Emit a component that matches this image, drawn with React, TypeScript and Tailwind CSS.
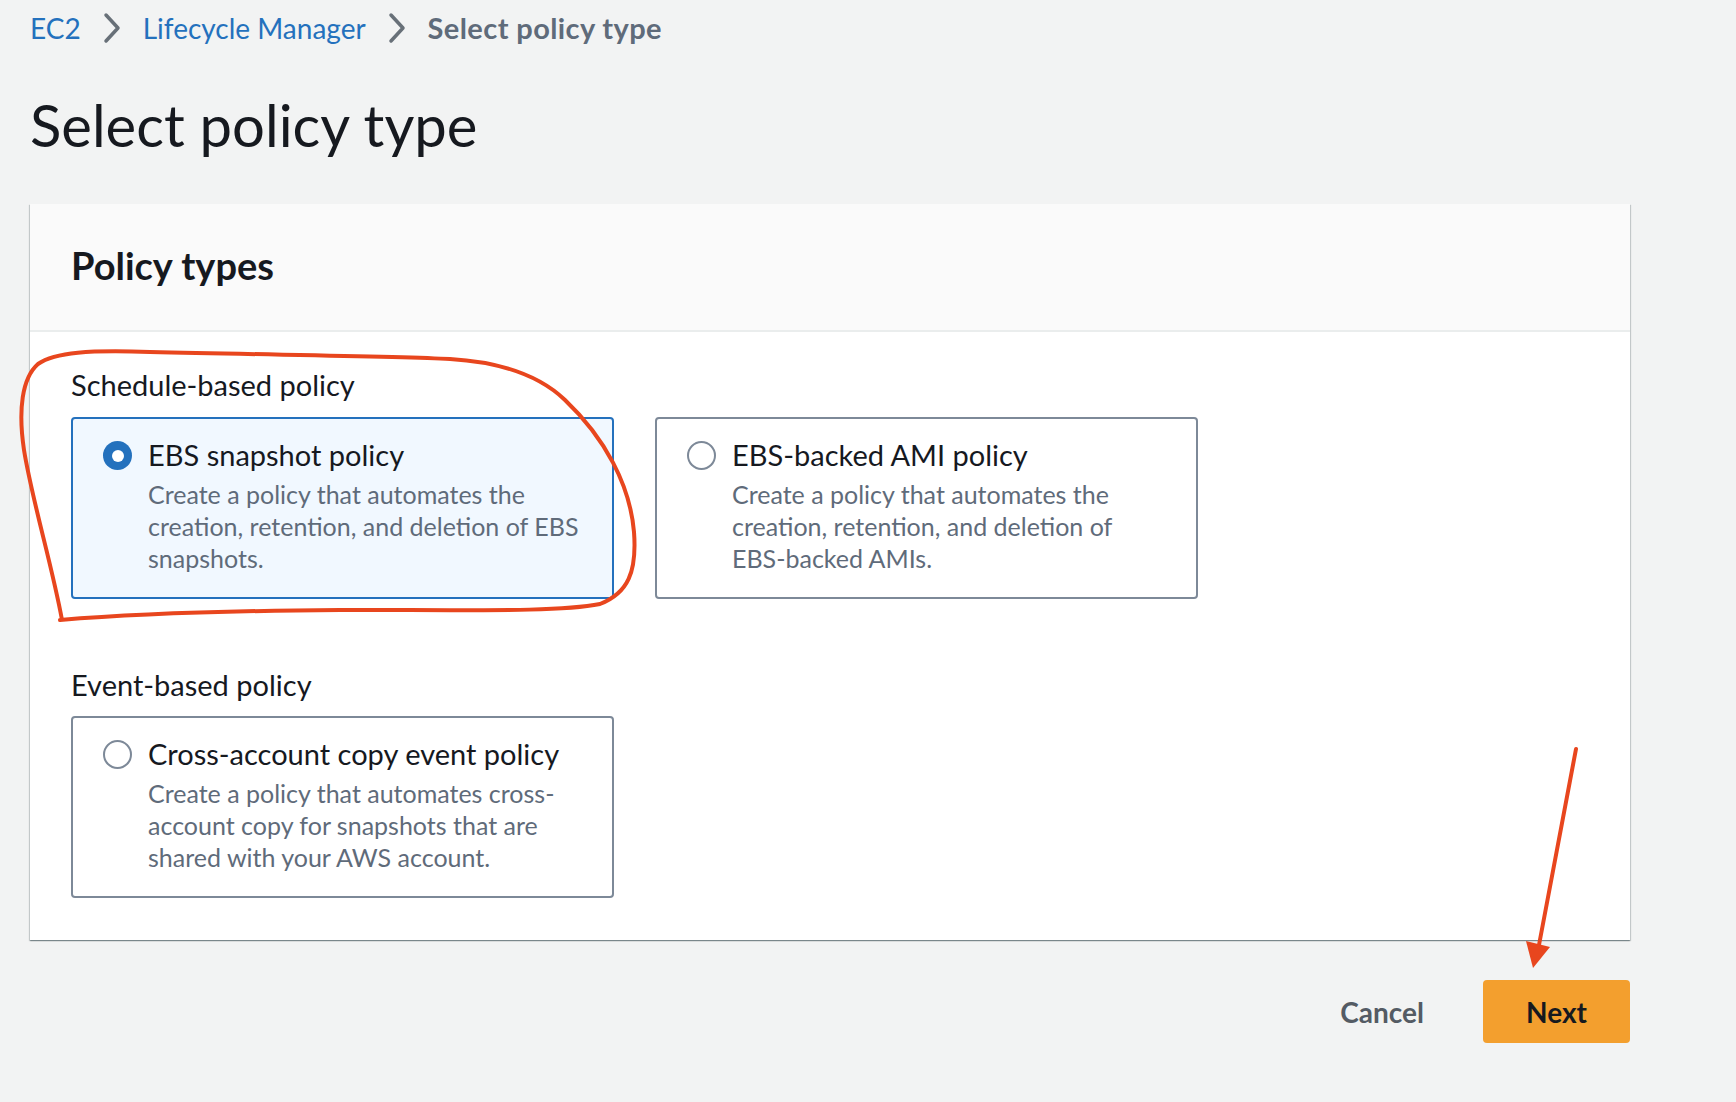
import React, { useState } from "react";

type PolicyOption = {
  id: string;
  title: string;
  lines: string[];
};

const schedulePolicies: PolicyOption[] = [
  {
    id: "ebs-snapshot",
    title: "EBS snapshot policy",
    lines: [
      "Create a policy that automates the",
      "creation, retention, and deletion of EBS",
      "snapshots.",
    ],
  },
  {
    id: "ebs-ami",
    title: "EBS-backed AMI policy",
    lines: [
      "Create a policy that automates the",
      "creation, retention, and deletion of",
      "EBS-backed AMIs.",
    ],
  },
];

const eventPolicies: PolicyOption[] = [
  {
    id: "cross-account",
    title: "Cross-account copy event policy",
    lines: [
      "Create a policy that automates cross-",
      "account copy for snapshots that are",
      "shared with your AWS account.",
    ],
  },
];

function Chevron() {
  return (
    <svg width="18" height="32" viewBox="0 0 18 32" className="mx-[22px]">
      <path
        d="M3 3 L15 16 L3 29"
        fill="none"
        stroke="#687078"
        strokeWidth="3.5"
        strokeLinecap="round"
        strokeLinejoin="round"
      />
    </svg>
  );
}

function Radio({ checked }: { checked: boolean }) {
  return checked ? (
    <span className="mt-[6px] flex h-[29px] w-[29px] shrink-0 items-center justify-center rounded-full bg-[#2471bd]">
      <span className="h-[12px] w-[12px] rounded-full bg-white"></span>
    </span>
  ) : (
    <span className="mt-[6px] h-[29px] w-[29px] shrink-0 rounded-full border-[2.5px] border-[#7d8998] bg-white"></span>
  );
}

function PolicyCard({
  option,
  checked,
  onSelect,
}: {
  option: PolicyOption;
  checked: boolean;
  onSelect: () => void;
}) {
  return (
    <div
      onClick={onSelect}
      className={
        checked
          ? "flex h-[182px] w-[543px] cursor-pointer gap-[16px] rounded-[4px] border-2 border-[#2471bd] bg-[#f1f8ff] pl-[30px] pr-[20px] pt-[16px]"
          : "flex h-[182px] w-[543px] cursor-pointer gap-[16px] rounded-[4px] border-2 border-[#7d8998] bg-white pl-[30px] pr-[20px] pt-[16px]"
      }
    >
      <Radio checked={checked} />
      <div>
        <p className="text-[29px] leading-[40px] text-[#16191f]">
          {option.title}
        </p>
        <div className="mt-[3px] text-[25px] leading-[32px] text-[#5f6b7a]">
          {option.lines.map((line) => (
            <p key={line} className="whitespace-nowrap">
              {line}
            </p>
          ))}
        </div>
      </div>
    </div>
  );
}

export default function App() {
  const [selected, setSelected] = useState("ebs-snapshot");

  return (
    <div className="relative min-h-screen bg-[#f2f3f3] font-['Lato',sans-serif]">
      <div className="px-[30px] pt-[8px]">
        {/* breadcrumb */}
        <nav className="flex items-center text-[28px] leading-[40px]">
          <a className="text-[#2471bd]">EC2</a>
          <Chevron />
          <a className="text-[#2471bd]">Lifecycle Manager</a>
          <Chevron />
          <span className="text-[29px] font-bold tracking-[0.4px] text-[#5f6b7a]">
            Select policy type
          </span>
        </nav>

        <h1 className="mt-[43px] text-[58px] leading-[68px] text-[#16191f]">
          Select policy type
        </h1>

        {/* panel */}
        <div className="mt-[45px] w-[1600px] bg-white shadow-[0_1px_1px_0_rgba(0,28,36,0.3),1px_1px_1px_0_rgba(0,28,36,0.15),-1px_1px_1px_0_rgba(0,28,36,0.15)]">
          <div className="flex h-[128px] items-center border-b-2 border-[#eaeded] bg-[#fafafa] px-[41px] pb-[4px]">
            <h2 className="text-[38px] font-bold text-[#16191f]">
              Policy types
            </h2>
          </div>
          <div className="px-[41px] pb-[42px] pt-[33px]">
            <p className="text-[29px] leading-[40px] text-[#16191f]">
              Schedule-based policy
            </p>
            <div className="mt-[12px] flex gap-[41px]">
              {schedulePolicies.map((p) => (
                <PolicyCard
                  key={p.id}
                  option={p}
                  checked={selected === p.id}
                  onSelect={() => setSelected(p.id)}
                />
              ))}
            </div>

            <p className="mt-[66px] text-[29px] leading-[40px] text-[#16191f]">
              Event-based policy
            </p>
            <div className="mt-[11px] flex gap-[41px]">
              {eventPolicies.map((p) => (
                <PolicyCard
                  key={p.id}
                  option={p}
                  checked={selected === p.id}
                  onSelect={() => setSelected(p.id)}
                />
              ))}
            </div>
          </div>
        </div>

        {/* actions */}
        <div className="mt-[40px] flex w-[1600px] items-center justify-end gap-[59px]">
          <button className="text-[28px] font-bold text-[#545b64]">Cancel</button>
          <button className="h-[63px] w-[147px] rounded-[4px] bg-[#f39f2e] text-[28px] font-bold text-[#16191f]">
            Next
          </button>
        </div>
      </div>

      {/* red annotations drawn over the screenshot */}
      <svg
        className="pointer-events-none absolute left-0 top-0"
        width="1736"
        height="1102"
        viewBox="0 0 1736 1102"
      >
        <path
          d="M62 620 C52 565 32 500 24 450 C18 410 22 378 38 364 C55 352 90 350 150 352 C280 355 400 356 450 359 C500 362 540 376 565 400 C605 438 630 485 634 532 C637 572 628 593 600 604 C560 612 480 610 340 610 C200 611 120 615 60 620"
          fill="none"
          stroke="#e8461e"
          strokeWidth="4"
          strokeLinecap="round"
          strokeLinejoin="round"
        />
        <line
          x1="1576"
          y1="749"
          x2="1539"
          y2="945"
          stroke="#e8461e"
          strokeWidth="4"
          strokeLinecap="round"
        />
        <polygon points="1526,941 1550,947 1533,968" fill="#e8461e" />
      </svg>
    </div>
  );
}
